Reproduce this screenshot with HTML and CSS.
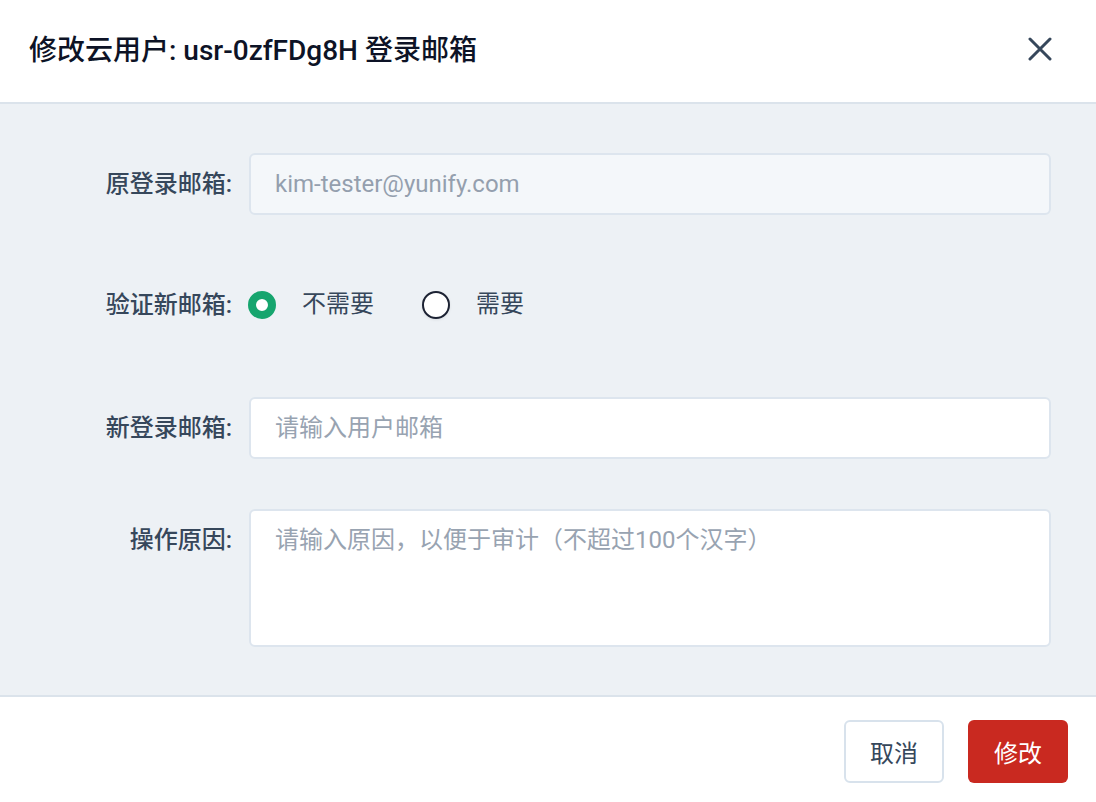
FILE: index.html
```html
<!DOCTYPE html>
<html lang="zh-CN">
<head>
<meta charset="utf-8">
<title>修改云用户登录邮箱</title>
<link rel="stylesheet" href="styles.css">
</head>
<body>
<div class="dialog">
  <header class="dlg-header">
    <h1 class="dlg-title">修改云用户: usr-0zfFDg8H 登录邮箱</h1>
    <button class="dlg-close" aria-label="关闭">
      <svg width="24" height="24" viewBox="0 0 24 24"><path d="M2 2 L22 22 M22 2 L2 22" stroke="#36475b" stroke-width="3" stroke-linecap="round" fill="none"/></svg>
    </button>
  </header>
  <main class="dlg-body">
    <div class="form">
      <label class="f-label">原登录邮箱:</label>
      <div class="f-input readonly">kim-tester@yunify.com</div>

      <label class="f-label radio-label">验证新邮箱:</label>
      <div class="radio-group">
        <span class="radio-opt"><span class="radio checked"></span><span>不需要</span></span>
        <span class="radio-opt"><span class="radio"></span><span>需要</span></span>
      </div>

      <label class="f-label">新登录邮箱:</label>
      <input class="f-input" type="text" placeholder="请输入用户邮箱">

      <label class="f-label top">操作原因:</label>
      <textarea class="f-input f-textarea" placeholder="请输入原因，以便于审计（不超过100个汉字）"></textarea>
    </div>
  </main>
  <footer class="dlg-footer">
    <button class="btn btn-default">取消</button>
    <button class="btn btn-danger">修改</button>
  </footer>
</div>
</body>
</html>
```

FILE: styles.css
```css
* { box-sizing: border-box; }
html, body { margin: 0; padding: 0; background: #fff; }
body {
  font-family: Roboto, "Noto Sans CJK SC", sans-serif;
  color: #36475b;
}
.dialog { width: 1096px; height: 802px; overflow: hidden; display: flex; flex-direction: column; }
.dlg-header {
  height: 104px;
  flex: none;
  display: flex;
  align-items: center;
  justify-content: space-between;
  padding: 0 44px 6px 29px;
  border-bottom: 2px solid #dbe3eb;
}
.dlg-title {
  margin: 0;
  font-size: 28px;
  font-weight: 500;
  color: #0d1326;
  letter-spacing: 0;
}
.dlg-close {
  border: 0; background: none; padding: 0; width: 24px; height: 24px; display: block;
  margin-top: 2px;
}
.dlg-close svg { display: block; }
.dlg-body {
  flex: none;
  height: 593px;
  background: #edf1f5;
  border-bottom: 2px solid #dbe3eb;
  padding: 49px 45px 0 0;
}
.form {
  display: grid;
  grid-template-columns: 232px 1fr;
  column-gap: 17px;
  align-items: center;
}
.f-label {
  text-align: right;
  font-size: 24px;
  font-weight: 500;
  color: #36475b;
  line-height: 30px;
}
.f-label.top { align-self: start; margin-top: 50px; padding-top: 16px; }
.f-input {
  height: 62px;
  width: 100%;
  border: 2px solid #dde5ee;
  border-radius: 6px;
  background: #fff;
  padding: 0 24px;
  font-family: Roboto, "Noto Sans CJK SC", sans-serif;
  font-size: 24px;
  color: #36475b;
  display: flex;
  align-items: center;
  outline: none;
}
.f-input::placeholder { color: #98a3b1; }
.f-input.readonly { background: #f4f7fa; color: #949fae; }
.radio-group {
  height: 62px;
  margin: 59px 0 61px -1px;
  display: flex;
  align-items: center;
  gap: 48px;
  font-size: 24px;
  line-height: 28px;
  color: #36475b;
}
.radio-label { margin: 59px 0 61px; }
.radio-opt { display: flex; align-items: center; gap: 26px; }
.radio-opt span:last-child { margin-top: -3px; }
.radio {
  width: 28px; height: 28px; border-radius: 50%;
  border: 2px solid #1c2233;
  background: #fff;
  box-shadow: 0 1px 3px rgba(0,0,0,0.08);
  display: block;
  margin-top: -1px;
}
.radio.checked {
  border: 8.5px solid #16a56e;
  box-shadow: none;
}
.f-textarea {
  display: block;
  height: 138px;
  margin-top: 50px;
  padding: 14px 24px;
  resize: none;
  line-height: 30px;
}
.dlg-footer {
  flex: 1;
  display: flex;
  justify-content: flex-end;
  align-items: flex-start;
  gap: 24px;
  padding: 23px 28px 0 0;
}
.btn {
  width: 100px; height: 63px;
  border-radius: 6px;
  font-family: Roboto, "Noto Sans CJK SC", sans-serif;
  font-size: 24px;
  cursor: pointer;
}
.btn-default { background: #fff; border: 2px solid #d8e2ec; color: #36475b; }
.btn-danger { background: #c92920; border: 0; color: #fff; }
```
